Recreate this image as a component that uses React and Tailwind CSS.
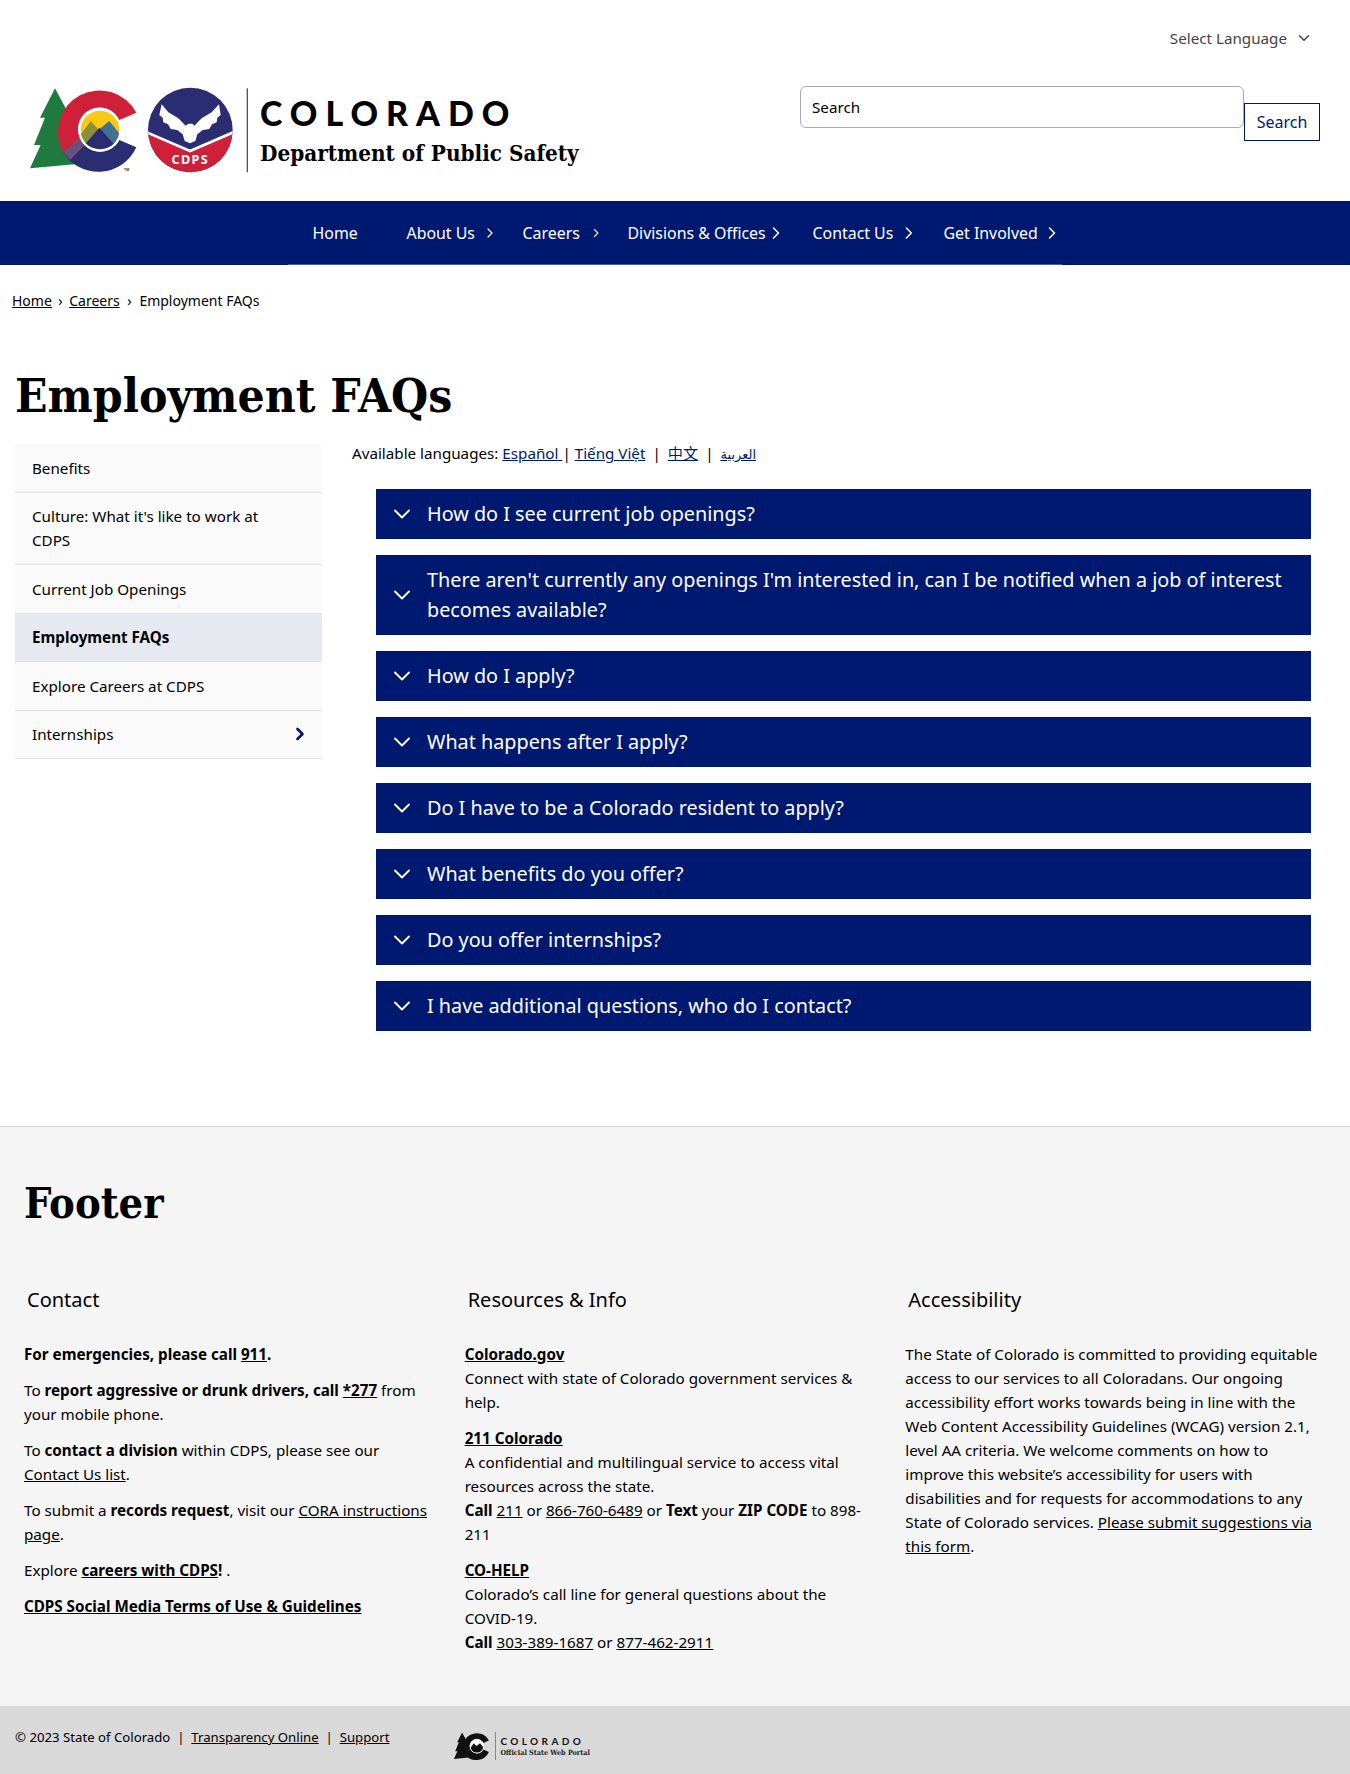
import React from 'react';
import { ChevronDown, ChevronRight } from 'lucide-react';

const sans = { fontFamily: '"Noto Sans", sans-serif' };
const slab = { fontFamily: '"DejaVu Serif Condensed", "DejaVu Serif", serif' };

const navItems = [
  { label: 'Home', w: 'w-[94px]' },
  { label: 'About Us', w: 'w-[116px]', arrow: 'ml-[7px]' },
  { label: 'Careers', w: 'w-[105px]', arrow: 'ml-[9px]' },
  { label: 'Divisions & Offices', w: 'w-[185px]', arrow: 'ml-[0px]' },
  { label: 'Contact Us', w: 'w-[131px]', arrow: 'ml-[6px]' },
  { label: 'Get Involved', w: 'w-[143px]', arrow: 'ml-[4px]' },
];

const sideItems = [
  { label: 'Benefits' },
  { label: "Culture: What it's like to work at CDPS" },
  { label: 'Current Job Openings' },
  { label: 'Employment FAQs', active: true },
  { label: 'Explore Careers at CDPS' },
  { label: 'Internships', arrow: true },
];

const faqs = [
  'How do I see current job openings?',
  "There aren't currently any openings I'm interested in, can I be notified when a job of interest becomes available?",
  'How do I apply?',
  'What happens after I apply?',
  'Do I have to be a Colorado resident to apply?',
  'What benefits do you offer?',
  'Do you offer internships?',
  'I have additional questions, who do I contact?',
];

const CLogo = ({ mono }) => {
  const navy = mono ? '#111' : '#2b2d72';
  const red = mono ? '#111' : '#ce2039';
  const green = mono ? '#111' : '#1f7a3f';
  const skyId = mono ? 'skyM' : 'sky';
  return (
    <>
      <path d="M105 40 L140 105 L165 268 L30 280 L62 210 L42 210 L75 128 L60 128 Z" fill={green} />
      <path d="M349 113 A125 125 0 1 0 128 230 L180 190 A65 65 0 0 1 298 135 Z" fill={red} />
      <path d="M128 230 A125 125 0 0 0 349 217 L298 195 A65 65 0 0 1 180 190 Z" fill={navy} />
      {!mono && <path d="M128 230 L180 190 L192 212 L150 255 Z" fill="#6d4f7e" />}
      <circle cx="240" cy="165" r="65" fill="#fff" />
      <clipPath id={skyId}>
        <circle cx="240" cy="165" r="58" />
      </clipPath>
      <g clipPath={`url(#${skyId})`}>
        <rect x="170" y="100" width="140" height="130" fill={mono ? '#fff' : '#f7c913'} />
        <path d="M170 195 L212 138 L250 180 L215 225 Z" fill={mono ? '#111' : '#8c8f3a'} />
        <path d="M235 165 L268 138 L310 190 L285 225 Z" fill={mono ? '#111' : '#3f7296'} />
        <path d="M180 225 L238 158 L298 225 Z" fill={navy} />
      </g>
    </>
  );
};

const Logo = () => (
  <svg width="230" height="110" viewBox="0 0 690 330" className="shrink-0">
    <CLogo />
    <text x="312" y="289" fontSize="11" fontWeight="700" fill="#333" fontFamily="Liberation Sans">TM</text>
    <clipPath id="badge">
      <circle cx="511" cy="165" r="127" />
    </clipPath>
    <g clipPath="url(#badge)">
      <rect x="380" y="30" width="260" height="270" fill="#2b2d72" />
      <path d="M380 172 L510 228 L640 172 L640 300 L380 300 Z" fill="#ce2039" />
      <path d="M380 172 L510 228 L640 172" stroke="#fff" strokeWidth="8" fill="none" />
    </g>
    <path d="M425 88 L445 112 L475 130 L497 152 L505 146 L517 146 L523 152 L545 130 L575 112 L597 88 L602 120 L592 128 L590 142 L576 148 L568 162 L548 165 L532 178 L526 198 L510 205 L494 198 L488 178 L472 165 L452 162 L444 148 L430 142 L428 128 L418 120 Z" fill="#fff" />
    <text x="511" y="268" textAnchor="middle" fontSize="38" fontWeight="700" letterSpacing="4" fill="#fff" fontFamily="Noto Sans">CDPS</text>
    <rect x="680" y="40" width="4" height="252" fill="#555" />
  </svg>
);

const FooterLogo = () => (
  <div className="flex items-center">
    <svg width="38" height="28" viewBox="25 35 340 255" className="shrink-0">
      <CLogo mono />
    </svg>
    <div className="ml-[4px] border-l border-[#888] pl-[4px] h-[28px] flex flex-col justify-center">
      <div className="text-[10px] leading-[12px] font-bold tracking-[0.34em] text-[#111]" style={{ fontFamily: 'Lato, sans-serif' }}>COLORADO</div>
      <div className="text-[7.2px] leading-[11px] font-bold text-[#222]" style={slab}>Official State Web Portal</div>
    </div>
  </div>
);

const A = ({ children, className = '' }) => (
  <a href="#" className={`underline ${className}`}>{children}</a>
);

const App = () => {
  return (
    <div className="w-[1350px] h-[1774px] bg-white text-black text-[15.2px] leading-6 overflow-hidden" style={sans}>
      <header className="h-[201px]">
        <div className="flex justify-end items-center h-[38px] pt-[38px] pr-[37px] text-[#444]">
          <span>Select Language</span>
          <ChevronDown size={18} className="ml-[8px]" />
        </div>
        <div className="flex mt-[37px]">
          <div className="ml-[20px] flex">
            <Logo />
            <div className="ml-[10px] mt-[18px]">
              <div className="text-[34px] leading-[40px] font-black tracking-[8px]" style={{ fontFamily: 'Lato, sans-serif' }}>COLORADO</div>
              <div className="text-[22.3px] leading-[30px] font-bold mt-[5px]" style={slab}>Department of Public Safety</div>
            </div>
          </div>
          <div className="absolute left-[800px] top-[86px] flex items-start">
            <div className="w-[444px] h-[42px] border border-[#aaa] rounded-md px-[11px] flex items-center">Search</div>
            <button className="w-[76px] h-[38px] mt-[17px] border border-[#001970] text-[#001970] text-base">Search</button>
          </div>
        </div>
      </header>

      <nav className="h-[64px] bg-[#001970]">
        <div className="w-[774px] h-[64px] ml-[288px] flex items-center border-b border-[#4a5a9a] text-white text-[15.9px]">
          {navItems.map((item) => (
            <div key={item.label} className={`${item.w} pl-[24.5px] flex items-center whitespace-nowrap shrink-0`}>
              {item.label}
              {item.arrow && <ChevronRight size={20} strokeWidth={1.8} className={item.arrow} />}
            </div>
          ))}
        </div>
      </nav>

      <div className="pl-[12px] pt-[24px] h-[60px] text-sm leading-6 flex items-start">
        <A>Home</A>
        <span className="mx-[6.5px]">›</span>
        <A>Careers</A>
        <span className="mx-[7.7px]">›</span>
        <span>Employment FAQs</span>
      </div>

      <h1 className="ml-[15px] mt-[40px] text-[47.5px] leading-[60px] font-bold" style={slab}>Employment FAQs</h1>

      <div className="flex mt-[19px] h-[682px]">
        <aside className="ml-[15px] w-[307px] shrink-0">
          {sideItems.map((item) => (
            <div
              key={item.label}
              className={`pl-[17px] pr-[12px] py-[11.75px] border-b border-[#e2e2e2] flex items-center justify-between ${item.active ? 'bg-[#e6e9f0] font-bold' : 'bg-[#fafafa]'}`}
            >
              <span className="max-w-[250px]">{item.label}</span>
              {item.arrow && <ChevronRight size={20} strokeWidth={3.2} className="text-[#001970] my-[-4px]" />}
            </div>
          ))}
        </aside>
        <main className="ml-[30px] w-[959px] mt-[-4px]">
          <p className="h-[49px] whitespace-nowrap">
            Available languages: <A className="text-[#001970]">Español </A> | <A className="text-[#001970]"> Tiếng Việt</A><span className="mx-[7px]">|</span><A className="text-[#001970]"><span style={{ fontFamily: '"Noto Sans CJK SC", sans-serif' }}>中文</span></A><span className="mx-[7px]">|</span><A className="text-[#001970]"><span style={{ fontFamily: '"DejaVu Sans", sans-serif' }} className="text-[13px]">العربية</span></A>
          </p>
          <div className="ml-[24px] w-[935px] flex flex-col gap-[16px]">
            {faqs.map((q) => (
              <div key={q} className="bg-[#001970] text-white flex items-center pl-[12px] pr-[16px] py-[10px] text-[19.8px] leading-[30px]">
                <ChevronDown size={28} strokeWidth={1.6} className="shrink-0 mr-[11px]" />
                <span>{q}</span>
              </div>
            ))}
          </div>
        </main>
      </div>

      <footer className="h-[649px] bg-[#f5f5f5] border-t border-[#d4d4d4]">
        <h2 className="ml-[24px] pt-[46px] text-[43px] leading-[60px] font-bold" style={slab}>Footer</h2>
        <div className="grid grid-cols-3 gap-x-[20px] pl-[24px] pr-[24px] mt-[52px] h-[421px]">
          <div className="max-w-[410px]">
            <h3 className="pl-[3px] text-[20px] leading-[30px]">Contact</h3>
            <div className="mt-[27px] flex flex-col gap-[12px]">
              <p><b>For emergencies, please call <A>911</A>.</b></p>
              <p>To <b>report aggressive or drunk drivers, call <A>*277</A></b> from your mobile phone.</p>
              <p>To <b>contact a division</b> within CDPS, please see our <A>Contact Us list</A>.</p>
              <p>To submit a <b>records request</b>, visit our <A>CORA instructions page</A>.</p>
              <p>Explore <b><A>careers with CDPS</A>!</b> .</p>
              <p><b><A>CDPS Social Media Terms of Use &amp; Guidelines</A></b></p>
            </div>
          </div>
          <div className="max-w-[410px]">
            <h3 className="pl-[3px] text-[20px] leading-[30px]">Resources &amp; Info</h3>
            <div className="mt-[27px] flex flex-col gap-[12px]">
              <p><b><A>Colorado.gov</A></b><br />Connect with state of Colorado government services &amp; help.</p>
              <p><b><A>211 Colorado</A></b><br />A confidential and multilingual service to access vital resources across the state.<br /><b>Call</b> <A>211</A> or <A>866-760-6489</A> or <b>Text</b> your <b>ZIP CODE</b> to 898-211</p>
              <p><b><A>CO-HELP</A></b><br />Colorado’s call line for general questions about the COVID-19.<br /><b>Call</b> <A>303-389-1687</A> or <A>877-462-2911</A></p>
            </div>
          </div>
          <div>
            <h3 className="pl-[3px] text-[20px] leading-[30px]">Accessibility</h3>
            <div className="mt-[27px]">
              <p>The State of Colorado is committed to providing equitable access to our services to all Coloradans. Our ongoing accessibility effort works towards being in line with the Web Content Accessibility Guidelines (WCAG) version 2.1, level AA criteria. We welcome comments on how to improve this website’s accessibility for users with disabilities and for requests for accommodations to any State of Colorado services. <A>Please submit suggestions via this form</A>.</p>
            </div>
          </div>
        </div>
        <div className="h-[70px] bg-[#d9d9d9] flex items-center pl-[15px] text-[13.2px]">
          <span className="mb-[8px]">© 2023 State of Colorado&nbsp; |&nbsp; <A>Transparency Online</A>&nbsp; |&nbsp; <A>Support</A></span>
          <div className="ml-[64px] mt-[10px]"><FooterLogo /></div>
        </div>
      </footer>
    </div>
  );
};

export default App;
